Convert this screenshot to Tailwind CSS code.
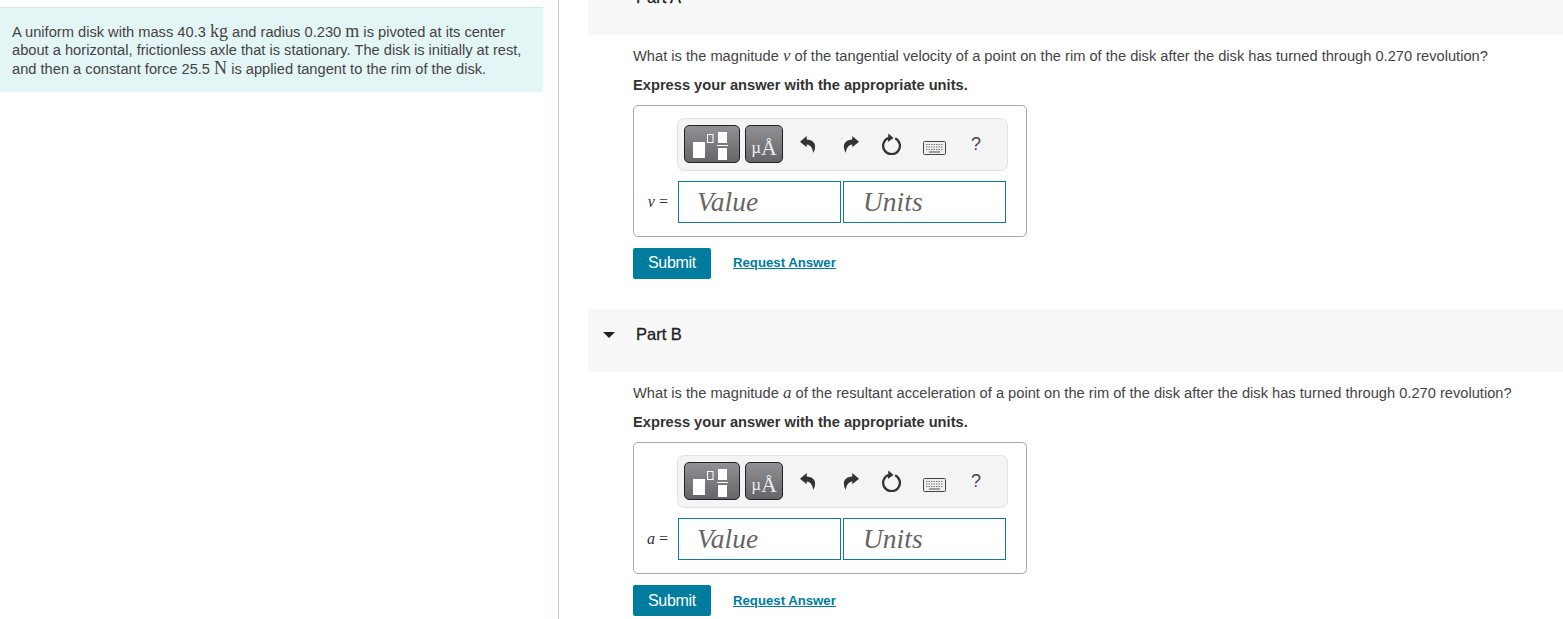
<!DOCTYPE html>
<html lang="en">
<head>
    <meta charset="UTF-8">
    <meta name="viewport" content="width=device-width, initial-scale=1.0">
    <title>Part A and Part B</title>
    <script src="https://cdn.jsdelivr.net/npm/@tailwindcss/browser@4"></script>
</head>
<body class="bg-white font-['Liberation_Sans',sans-serif] text-[#333]">
    <div class="flex h-[619px] overflow-hidden">
        <!-- problem statement -->
        <aside class="w-[559px] shrink-0 border-r border-[#b9d1e6] pt-[7px]">
            <div class="w-[543px] h-[85px] bg-[#e4f5f6] border-t border-[#d5e6e8] pl-[12px] pt-[14px] text-[14.67px] leading-[18px] text-[#444] whitespace-nowrap">
                <p>A uniform disk with mass 40.3 <span class="font-['Liberation_Serif',serif] text-[18px] leading-none">kg</span> and radius 0.230 <span class="font-['Liberation_Serif',serif] text-[18px] leading-none">m</span> is pivoted at its center<br>about a horizontal, frictionless axle that is stationary. The disk is initially at rest,<br>and then a constant force 25.5 <span class="font-['Liberation_Serif',serif] text-[18px] leading-none">N</span> is applied tangent to the rim of the disk.</p>
            </div>
        </aside>

        <main class="flex-1 ml-[29px] -mt-[28px]">
            <!-- Part A -->
            <section class="h-[337px]">
                <div class="h-[63px] bg-[#f8f8f8] pl-[48px] pt-[15px] text-[16.5px] leading-[20px] text-[#222] [-webkit-text-stroke:0.3px_#222]">Part A</div>
                <p class="ml-[45px] mt-[12px] h-[18px] text-[14.67px] leading-[18px] text-[#444] whitespace-nowrap">What is the magnitude <i class="font-['Liberation_Serif',serif] text-[17px] leading-none">v</i> of the tangential velocity of a point on the rim of the disk after the disk has turned through 0.270 revolution?</p>
                <p class="ml-[45px] mt-[11px] h-[18px] text-[14.67px] leading-[18px] font-bold text-[#333]">Express your answer with the appropriate units.</p>
                <div class="ml-[45px] mt-[11px] w-[394px] h-[132px] border border-[#aaa] rounded-[5px] pt-[12px] pl-[43px]">
                    <div class="flex items-center w-[331px] h-[53px] bg-[#f4f4f4] border border-[#e2e2e2] rounded-[7px] pl-[6px] pb-[1px]">
                        <div class="w-[56px] h-[38px] rounded-[5px] border border-[#222] bg-gradient-to-b from-[#909095] to-[#66666a]">
                            <svg width="54" height="36" viewBox="0 0 54 36" fill="#fff"><rect x="8" y="16" width="12" height="16"/><rect x="22.5" y="8.5" width="5.5" height="8" fill="none" stroke="#fff"/><rect x="33" y="6" width="9" height="11"/><rect x="32" y="19" width="11" height="1"/><rect x="33" y="22" width="9" height="12"/></svg>
                        </div>
                        <div class="ml-[5px] w-[38px] h-[38px] rounded-[5px] border border-[#222] bg-gradient-to-b from-[#909095] to-[#66666a] flex items-end justify-center pb-[2px] font-['Liberation_Serif',serif] text-[22px] leading-[24px] text-[#eee]"><span class="text-[17px]">µ</span>Å</div>
                        <svg class="ml-[17px]" width="16" height="17" viewBox="0 0 16 17" fill="#333"><path d="M0 5.700 L6.700 0 V3.500 C12 3.500 16 7 15 12 C14.800 14 14 15.500 13 17 C13 13 11 9 6.700 8.500 V11.300 Z"/></svg>
                        <svg class="ml-[27px]" width="16" height="17" viewBox="0 0 16 17" fill="#333"><path d="M16 5.700 L9.300 0 V3.500 C4 3.500 0 7 1 12 C1.200 14 2 15.500 3 17 C3 13 5 9 9.300 8.500 V11.300 Z"/></svg>
                        <svg class="ml-[22px]" width="21" height="22" viewBox="0 0 20 21" fill="none"><path d="M7 4.800 A8 8 0 1 0 13.500 5" stroke="#333" stroke-width="2.200"/><path d="M7 0.500 L12 4.800 L6.500 8.500 Z" fill="#333"/></svg>
                        <svg class="ml-[21px] mt-[7px]" width="23" height="14" viewBox="0 0 23 14"><rect x="0.500" y="0.500" width="22" height="13" rx="1" fill="#eee" stroke="#444"/><path d="M3 3.500 H20 M3 6 H20 M3 8.500 H20" stroke="#777" stroke-width="1.200" stroke-dasharray="1.500 1"/><path d="M6 11 H17" stroke="#666" stroke-width="1.200"/></svg>
                        <span class="ml-[25px] text-[18px] leading-[20px] text-[#444]">?</span>
                    </div>
                    <div class="flex mt-[10px] -ml-[43px]">
                        <div class="w-[44px] pr-[10px] text-right font-['Liberation_Serif',serif] text-[16px] leading-[42px] text-[#333]"><i>v</i> =</div>
                        <div class="w-[163px] h-[42px] border border-[#0f7c9c] pl-[18px] font-['Liberation_Serif',serif] italic text-[27.5px] leading-[40px] text-[#666]">Value</div>
                        <div class="ml-[2px] w-[163px] h-[42px] border border-[#0f7c9c] pl-[19px] font-['Liberation_Serif',serif] italic text-[27.5px] leading-[40px] text-[#666]">Units</div>
                    </div>
                </div>
                <div class="flex items-center ml-[45px] mt-[11px]">
                    <button class="w-[78px] h-[31px] pb-[2px] bg-[#007c9e] rounded-[2px] text-white text-[16px] tracking-[-0.3px]">Submit</button>
                    <a href="#" class="ml-[22px] -mt-[2px] text-[13.2px] font-bold underline text-[#007c9e]">Request Answer</a>
                </div>
            </section>

            <!-- Part B -->
            <section>
                <div class="relative h-[63px] bg-[#f8f8f8] pl-[48px] pt-[15px] text-[16.5px] leading-[20px] text-[#222] [-webkit-text-stroke:0.3px_#222]">
                    <span class="absolute left-[15px] top-[23px] w-0 h-0 border-x-[6px] border-x-transparent border-t-[6px] border-t-[#222]"></span>
                    Part B
                </div>
                <p class="ml-[45px] mt-[12px] h-[18px] text-[14.67px] leading-[18px] text-[#444] whitespace-nowrap">What is the magnitude <i class="font-['Liberation_Serif',serif] text-[17px] leading-none">a</i> of the resultant acceleration of a point on the rim of the disk after the disk has turned through 0.270 revolution?</p>
                <p class="ml-[45px] mt-[11px] h-[18px] text-[14.67px] leading-[18px] font-bold text-[#333]">Express your answer with the appropriate units.</p>
                <div class="ml-[45px] mt-[11px] w-[394px] h-[132px] border border-[#aaa] rounded-[5px] pt-[12px] pl-[43px]">
                    <div class="flex items-center w-[331px] h-[53px] bg-[#f4f4f4] border border-[#e2e2e2] rounded-[7px] pl-[6px] pb-[1px]">
                        <div class="w-[56px] h-[38px] rounded-[5px] border border-[#222] bg-gradient-to-b from-[#909095] to-[#66666a]">
                            <svg width="54" height="36" viewBox="0 0 54 36" fill="#fff"><rect x="8" y="16" width="12" height="16"/><rect x="22.5" y="8.5" width="5.5" height="8" fill="none" stroke="#fff"/><rect x="33" y="6" width="9" height="11"/><rect x="32" y="19" width="11" height="1"/><rect x="33" y="22" width="9" height="12"/></svg>
                        </div>
                        <div class="ml-[5px] w-[38px] h-[38px] rounded-[5px] border border-[#222] bg-gradient-to-b from-[#909095] to-[#66666a] flex items-end justify-center pb-[2px] font-['Liberation_Serif',serif] text-[22px] leading-[24px] text-[#eee]"><span class="text-[17px]">µ</span>Å</div>
                        <svg class="ml-[17px]" width="16" height="17" viewBox="0 0 16 17" fill="#333"><path d="M0 5.700 L6.700 0 V3.500 C12 3.500 16 7 15 12 C14.800 14 14 15.500 13 17 C13 13 11 9 6.700 8.500 V11.300 Z"/></svg>
                        <svg class="ml-[27px]" width="16" height="17" viewBox="0 0 16 17" fill="#333"><path d="M16 5.700 L9.300 0 V3.500 C4 3.500 0 7 1 12 C1.200 14 2 15.500 3 17 C3 13 5 9 9.300 8.500 V11.300 Z"/></svg>
                        <svg class="ml-[22px]" width="21" height="22" viewBox="0 0 20 21" fill="none"><path d="M7 4.800 A8 8 0 1 0 13.500 5" stroke="#333" stroke-width="2.200"/><path d="M7 0.500 L12 4.800 L6.500 8.500 Z" fill="#333"/></svg>
                        <svg class="ml-[21px] mt-[7px]" width="23" height="14" viewBox="0 0 23 14"><rect x="0.500" y="0.500" width="22" height="13" rx="1" fill="#eee" stroke="#444"/><path d="M3 3.500 H20 M3 6 H20 M3 8.500 H20" stroke="#777" stroke-width="1.200" stroke-dasharray="1.500 1"/><path d="M6 11 H17" stroke="#666" stroke-width="1.200"/></svg>
                        <span class="ml-[25px] text-[18px] leading-[20px] text-[#444]">?</span>
                    </div>
                    <div class="flex mt-[10px] -ml-[43px]">
                        <div class="w-[44px] pr-[10px] text-right font-['Liberation_Serif',serif] text-[16px] leading-[42px] text-[#333]"><i>a</i> =</div>
                        <div class="w-[163px] h-[42px] border border-[#0f7c9c] pl-[18px] font-['Liberation_Serif',serif] italic text-[27.5px] leading-[40px] text-[#666]">Value</div>
                        <div class="ml-[2px] w-[163px] h-[42px] border border-[#0f7c9c] pl-[19px] font-['Liberation_Serif',serif] italic text-[27.5px] leading-[40px] text-[#666]">Units</div>
                    </div>
                </div>
                <div class="flex items-center ml-[45px] mt-[11px]">
                    <button class="w-[78px] h-[31px] bg-[#007c9e] rounded-[2px] text-white text-[16px] tracking-[-0.3px]">Submit</button>
                    <a href="#" class="ml-[22px] text-[13.2px] font-bold underline text-[#007c9e]">Request Answer</a>
                </div>
            </section>
        </main>
    </div>
</body>
</html>
